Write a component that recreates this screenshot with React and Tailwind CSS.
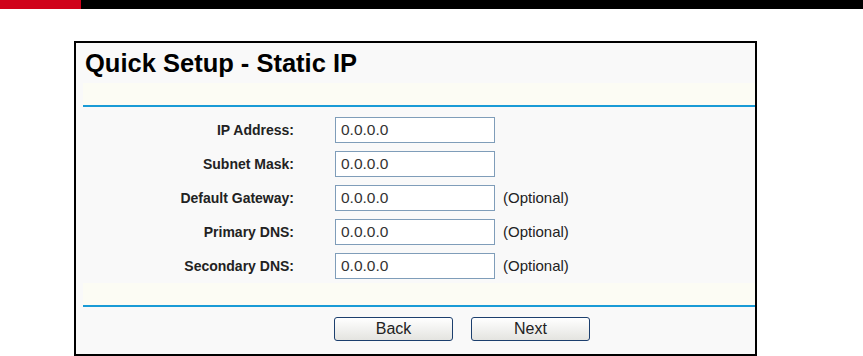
import React from 'react';

const fields = [
  { label: 'IP Address:', value: '0.0.0.0', optional: false },
  { label: 'Subnet Mask:', value: '0.0.0.0', optional: false },
  { label: 'Default Gateway:', value: '0.0.0.0', optional: true },
  { label: 'Primary DNS:', value: '0.0.0.0', optional: true },
  { label: 'Secondary DNS:', value: '0.0.0.0', optional: true },
];

function Divider() {
  return (
    <div className="ml-[7px]">
      <div className="h-[22px] bg-[#fcfcf4]" />
      <div className="h-[2px] bg-[#1a9bd6]" />
    </div>
  );
}

function Button({ children }) {
  return (
    <button
      type="button"
      className="w-[119px] h-[24px] rounded-[3px] border border-[#1c3f6e] bg-gradient-to-b from-white to-[#e4e4e0] text-[16px] leading-none text-[#222]"
    >
      {children}
    </button>
  );
}

export default function App() {
  return (
    <div className="w-[863px] h-[356px] bg-white overflow-hidden font-['Liberation_Sans',Arial,sans-serif]">
      {/* top strip */}
      <div className="flex h-[9px]">
        <div className="w-[81px] bg-[#d0021b]" />
        <div className="flex-1 bg-black" />
      </div>

      <div className="ml-[74px] mt-[32px] w-[683px] h-[315px] border-2 border-black bg-[#f9f9f9]">
        <div className="h-[40px] flex items-center pl-[9px]">
          <h1 className="text-[25.5px] font-bold leading-none text-black pt-[2px]">Quick Setup - Static IP</h1>
        </div>

        <Divider />

        <div className="pt-[6px]">
          {fields.map((f) => (
            <div key={f.label} className="h-[34px] flex items-center">
              <label className="w-[218px] text-right text-[14px] font-bold text-[#222]">{f.label}</label>
              <input
                type="text"
                defaultValue={f.value}
                className="ml-[41px] w-[160px] h-[26px] border border-[#7f9db9] bg-white px-[5px] text-[15.5px] text-[#333] outline-none"
              />
              {f.optional && <span className="ml-[8px] text-[15px] text-[#222]">(Optional)</span>}
            </div>
          ))}
        </div>

        <Divider />

        <div className="flex pt-[10px] pl-[258px] gap-[18px]">
          <Button>Back</Button>
          <Button>Next</Button>
        </div>
      </div>
    </div>
  );
}
